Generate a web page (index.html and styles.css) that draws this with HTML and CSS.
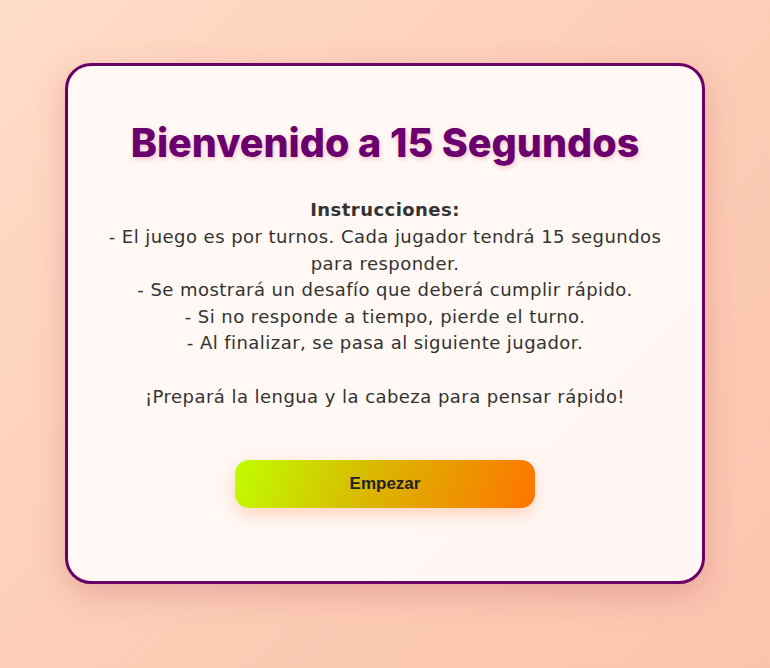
FILE: index.html
```html
<!DOCTYPE html>
<html lang="es">
<head>
<meta charset="utf-8">
<title>15 Segundos</title>
<link rel="stylesheet" href="styles.css">
</head>
<body>
  <main class="card">
    <h1 class="title">Bienvenido a 15 Segundos</h1>
    <p class="instructions">
      <strong>Instrucciones:</strong><br>
      - El juego es por turnos. Cada jugador tendrá 15 segundos para responder.<br>
      - Se mostrará un desafío que deberá cumplir rápido.<br>
      - Si no responde a tiempo, pierde el turno.<br>
      - Al finalizar, se pasa al siguiente jugador.<br><br>
      ¡Prepará la lengua y la cabeza para pensar rápido!
    </p>
    <button class="start">Empezar</button>
  </main>
</body>
</html>
```
FILE: styles.css
```css
* { box-sizing: border-box; }
html, body { margin: 0; height: 100%; }
body {
  background: linear-gradient(135deg, #ffdcc6 0%, #fccbb4 60%, #fbc3ae 100%);
  font-family: Inter, "Noto Sans", sans-serif;
  display: flex;
  justify-content: center;
  align-items: flex-start;
  padding-top: 63px;
}
.card {
  width: 640px;
  border: 3px solid #680068;
  border-radius: 26px;
  background: rgba(255, 250, 248, 0.95);
  box-shadow: 0 10px 30px rgba(170, 70, 90, 0.25);
  padding: 54px 32px 73px;
  text-align: center;
}
.title {
  margin: 0 0 30px;
  font-size: 39.5px;
  font-weight: 800;
  line-height: 1.2;
  color: #6a006e;
  text-shadow: 1px 2px 4px rgba(230, 140, 160, 0.5);
}
.instructions {
  margin: 0 0 50px;
  font-family: "DejaVu Sans", Inter, sans-serif;
  font-size: 18px;
  letter-spacing: 0.45px;
  line-height: 26.6px;
  color: #333;
}
.instructions strong { font-weight: 700; }
.start {
  width: 300px;
  height: 48px;
  border: none;
  border-radius: 14px;
  background: linear-gradient(110deg, #c0ff00 0%, #dab800 45%, #ff7400 100%);
  box-shadow: 0 6px 16px rgba(255, 140, 80, 0.35);
  font-family: "Liberation Sans", Arial, sans-serif;
  font-size: 17px;
  font-weight: 700;
  color: #222;
  cursor: pointer;
}
```
